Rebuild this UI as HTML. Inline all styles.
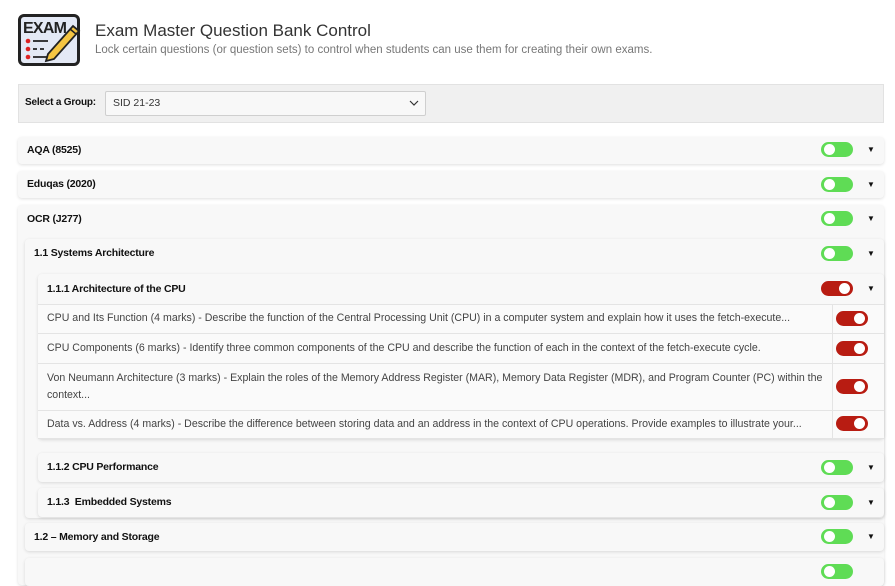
<!DOCTYPE html>
<html><head><style>
*{box-sizing:border-box;margin:0;padding:0}
body{width:895px;height:568px;overflow:hidden;background:#fff;font-family:"Liberation Sans",sans-serif;color:#111;position:relative}
.a{position:absolute}
.p{position:absolute;background:#f8f8f8;border-radius:4px;box-shadow:0 1px 3px rgba(0,0,0,.13)}
.h{position:absolute;font-weight:bold;font-size:10.5px;letter-spacing:-.2px;color:#111}
.tg{position:absolute;width:32px;height:15px;border-radius:8px}
.tg.g{background:#5fdc55}
.tg.r{background:#b81c12}
.tg::after{content:"";position:absolute;top:2px;width:11px;height:11px;border-radius:50%;background:#fff}
.tg.g::after{left:3px}
.tg.r::after{right:3px}
.ar{position:absolute;font-size:8px;color:#111}
.row{position:absolute;left:38px;width:846px;background:#fafafa;border-top:1px solid #e4e4e4;font-size:10.6px;color:#444;line-height:17px}
.row span{position:absolute;left:9px;width:780px;white-space:nowrap}
.row .sep{position:absolute;left:794px;top:0;bottom:0;border-left:1px solid #e4e4e4}
</style></head><body>
<div class="a" style="left:18px;top:14px;width:62px;height:52px;border:3px solid #222;border-radius:6px;background:#e4e9f5"></div>
<svg class="a" style="left:18px;top:14px" width="64" height="54" viewBox="0 0 64 54">
<text x="5" y="19" font-family="Liberation Sans" font-size="16" font-weight="bold" fill="#222" textLength="44">EXAM</text>
<circle cx="10" cy="27" r="2.3" fill="#d22"/><circle cx="10" cy="35" r="2.3" fill="#d22"/><circle cx="10" cy="43" r="2.3" fill="#d22"/>
<path d="M15 27h15M15 35h4M22 35h4M15 43h20" stroke="#222" stroke-width="1.8"/>
<path d="M30 40 L55 12 L61 17 L36 45 L28 47 Z" fill="#f5c542" stroke="#222" stroke-width="1.8"/>
<path d="M52 15l6 5" stroke="#222" stroke-width="1.5"/>
</svg>
<div class="a" style="left:95px;top:21px;font-size:17px;color:#333">Exam Master Question Bank Control</div>
<div class="a" style="left:95px;top:44px;font-size:11.5px;color:#777">Lock certain questions (or question sets) to control when students can use them for creating their own exams.</div>

<div class="a" style="left:18px;top:84px;width:866px;height:39px;background:#f0f0f0;border:1px solid #e2e2e2"></div>
<div class="h" style="left:25px;top:97px;font-size:10px">Select a Group:</div>
<div class="a" style="left:105px;top:91px;width:321px;height:25px;background:#f8f8f8;border:1px solid #cfcfcf;border-radius:2px;font-size:10.5px;color:#333;padding:5px 0 0 7px">SID 21-23</div>
<svg class="a" style="left:409px;top:99px" width="10" height="8"><path d="M1 2l4 4 4-4" stroke="#333" fill="none" stroke-width="1.2"/></svg>

<div class="p" style="left:18px;top:137px;width:866px;height:27px"></div>
<div class="h" style="left:27px;top:144px">AQA (8525)</div>
<div class="tg g" style="left:821px;top:142px"></div><div class="ar" style="left:867px;top:145px">▼</div>

<div class="p" style="left:18px;top:171px;width:866px;height:27px"></div>
<div class="h" style="left:27px;top:178px">Eduqas (2020)</div>
<div class="tg g" style="left:821px;top:177px"></div><div class="ar" style="left:867px;top:180px">▼</div>

<div class="p" style="left:18px;top:205px;width:866px;height:380px"></div>
<div class="h" style="left:27px;top:213px">OCR (J277)</div>
<div class="tg g" style="left:821px;top:211px"></div><div class="ar" style="left:867px;top:214px">▼</div>

<div class="p" style="left:25px;top:239px;width:859px;height:279px"></div>
<div class="h" style="left:34px;top:247px">1.1 Systems Architecture</div>
<div class="tg g" style="left:821px;top:246px"></div><div class="ar" style="left:867px;top:249px">▼</div>

<div class="p" style="left:38px;top:274px;width:846px;height:165px"></div>
<div class="h" style="left:47px;top:283px">1.1.1 Architecture of the CPU</div>
<div class="tg r" style="left:821px;top:281px"></div><div class="ar" style="left:867px;top:284px">▼</div>

<div class="row" style="top:304px;height:29px"><span style="top:5px">CPU and Its Function (4 marks) - Describe the function of the Central Processing Unit (CPU) in a computer system and explain how it uses the fetch-execute...</span><div class="sep"></div></div>
<div class="tg r" style="left:836px;top:311px"></div>
<div class="row" style="top:333px;height:30px"><span style="top:6px">CPU Components (6 marks) - Identify three common components of the CPU and describe the function of each in the context of the fetch-execute cycle.</span><div class="sep"></div></div>
<div class="tg r" style="left:836px;top:341px"></div>
<div class="row" style="top:363px;height:47px"><span style="top:6px;white-space:normal">Von Neumann Architecture (3 marks) - Explain the roles of the Memory Address Register (MAR), Memory Data Register (MDR), and Program Counter (PC) within the context...</span><div class="sep"></div></div>
<div class="tg r" style="left:836px;top:379px"></div>
<div class="row" style="top:410px;height:29px;border-bottom:1px solid #e4e4e4"><span style="top:5px">Data vs. Address (4 marks) - Describe the difference between storing data and an address in the context of CPU operations. Provide examples to illustrate your...</span><div class="sep"></div></div>
<div class="tg r" style="left:836px;top:416px"></div>

<div class="p" style="left:38px;top:453px;width:846px;height:29px"></div>
<div class="h" style="left:47px;top:461px">1.1.2 CPU Performance</div>
<div class="tg g" style="left:821px;top:460px"></div><div class="ar" style="left:867px;top:463px">▼</div>

<div class="p" style="left:38px;top:488px;width:846px;height:29px"></div>
<div class="h" style="left:47px;top:496px">1.1.3&nbsp; Embedded Systems</div>
<div class="tg g" style="left:821px;top:495px"></div><div class="ar" style="left:867px;top:498px">▼</div>

<div class="p" style="left:25px;top:523px;width:859px;height:28px"></div>
<div class="h" style="left:34px;top:531px">1.2 – Memory and Storage</div>
<div class="tg g" style="left:821px;top:529px"></div><div class="ar" style="left:867px;top:532px">▼</div>

<div class="p" style="left:25px;top:558px;width:859px;height:28px"></div>
<div class="tg g" style="left:821px;top:564px"></div>
</body></html>
